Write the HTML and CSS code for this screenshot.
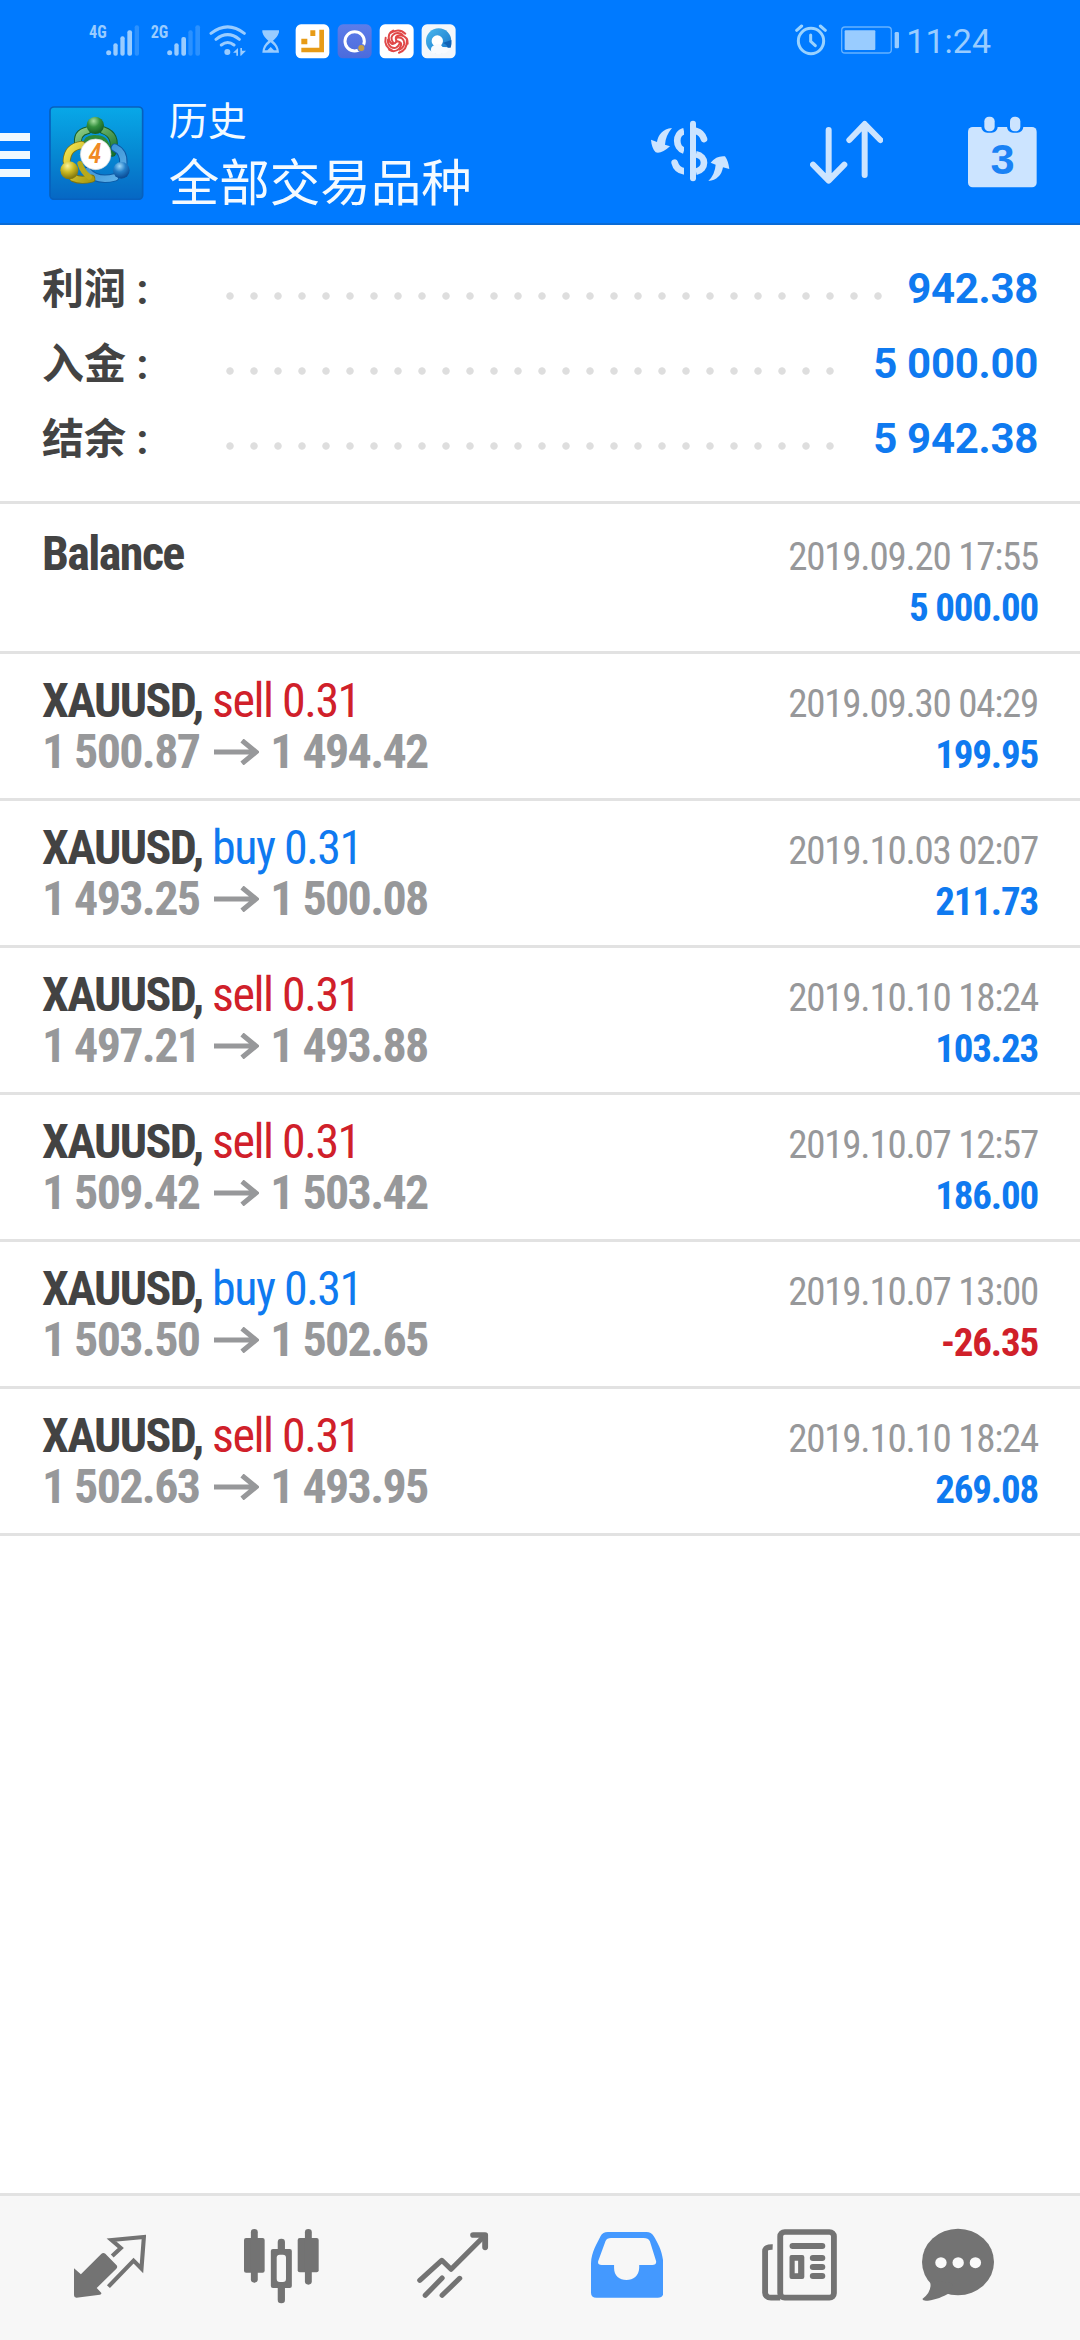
FILE: index.html
```html
<!DOCTYPE html>
<html lang="zh-CN">
<head>
<meta charset="utf-8">
<title>历史</title>
<link rel="stylesheet" href="styles.css">
</head>
<body>
<div class="app">
  <header class="header">
    <div class="status">
      <svg class="status-left" viewBox="55 65 1105 115" aria-hidden="true">
        <defs>
          <linearGradient id="sky" x1="0" y1="0" x2="1" y2="1"><stop offset="0" stop-color="#49b8ee"/><stop offset="1" stop-color="#1673c8"/></linearGradient>
          <linearGradient id="violet" x1="0" y1="0" x2="0" y2="1"><stop offset="0" stop-color="#5d7de9"/><stop offset="1" stop-color="#4b6bdc"/></linearGradient>
        </defs>
        <g fill="#99ccff">
          <text class="net" x="58" y="113" textLength="53" lengthAdjust="spacingAndGlyphs">4G</text>
          <text class="net" x="243" y="113" textLength="53" lengthAdjust="spacingAndGlyphs">2G</text>
          <circle cx="117" cy="157" r="7.500"/><rect x="131" y="129" width="13" height="37" rx="6"/><rect x="152" y="108" width="13" height="58" rx="6"/><rect x="173" y="90" width="14" height="76" rx="6"/>
          <circle cx="300" cy="157" r="7.500"/><rect x="314" y="129" width="13" height="37" rx="6"/><rect x="335" y="110" width="14" height="56" rx="6"/>
          <circle cx="473" cy="155" r="9"/>
          <path d="M490 157L505 143V166H500V157ZM512 143H517V151H529L514 166H512Z"/>
          <path d="M578 90H628V96Q624 110 610 121Q628 136 628 157H578Q578 136 596 121Q582 110 578 96ZM603 126Q588 137 585 150H593L603 140L613 150H621Q618 137 603 126Z" fill-rule="evenodd"/>
        </g>
        <g fill="#2b91ff"><rect x="195" y="75" width="13" height="91" rx="6"/><rect x="356" y="90" width="13" height="76" rx="6"/><rect x="377" y="75" width="14" height="91" rx="6"/></g>
        <g fill="none" stroke="#99ccff" stroke-width="9" stroke-linecap="round"><path d="M424 99Q474 60 524 99M439 117Q474 89 509 117M455 134Q474 119 493 134"/></g>
        <rect x="678" y="72" width="101" height="102" rx="16" fill="#fff"/>
        <path d="M749 88H763V156H695V142H749ZM722 90H737V107H722ZM695 115H713V132H695Z" fill="#e79b16"/>
        <rect x="804" y="72" width="102" height="102" rx="16" fill="url(#violet)"/>
        <circle cx="855" cy="123" r="29" fill="none" stroke="#fff" stroke-width="9"/><circle cx="875" cy="143" r="12" fill="#5874df"/><circle cx="875" cy="143" r="9" fill="#c5a046"/>
        <rect x="930" y="72" width="102" height="102" rx="16" fill="#fff"/>
        <g fill="none" stroke="#e04848" stroke-width="6" stroke-linecap="round">
          <g id="swirl"><path d="M981 123Q972 103 995 105Q1016 111 1014 130M963 98Q988 82 1007 100M981 112Q1004 109 1004 130Q1001 144 989 148"/></g>
          <use href="#swirl" transform="rotate(120 981 123)"/><use href="#swirl" transform="rotate(240 981 123)"/>
        </g>
        <rect x="1056" y="72" width="102" height="102" rx="16" fill="#f3f7fb"/>
        <circle cx="1107" cy="122" r="38" fill="url(#sky)"/><circle cx="1103" cy="122" r="17" fill="#fff"/>
        <path d="M1086 158Q1078 138 1097 133Q1110 125 1119 140L1145 141Q1133 163 1104 162Z" fill="#f8fbfe"/><path d="M1119 128Q1132 132 1134 142H1143Q1147 130 1145 119Z" fill="#1263b5"/>
      </svg>
      <div class="status-right">
        <svg class="status-power" viewBox="72 70 314 100" aria-hidden="true">
          <g fill="none" stroke="#99d2ff" stroke-linecap="round"><circle cx="120" cy="124" r="38" stroke-width="9"/><path d="M119 106V125L133 138" stroke-width="9"/><path d="M77 92L92 79M148 79L163 92" stroke-width="9"/></g>
          <rect x="212" y="82" width="149" height="78" rx="10" fill="none" stroke="#66b2ff" stroke-width="4"/>
          <rect x="221" y="92" width="92" height="59" rx="3" fill="#99ccff"/><rect x="371" y="97" width="13" height="49" rx="4" fill="#99ccff"/>
        </svg>
        <span class="clock">11:24</span>
      </div>
    </div>
    <div class="toolbar">
      <div class="menu"><i></i><i></i><i></i></div>
      <svg class="logo" viewBox="147 77 284 284" aria-hidden="true">
        <defs>
          <linearGradient id="lbg" x1="0" y1="0" x2="0" y2="1"><stop offset="0" stop-color="#08a8e8"/><stop offset=".5" stop-color="#0689d3"/><stop offset="1" stop-color="#0667c4"/></linearGradient>
          <linearGradient id="lg" x1="0" y1="0" x2="1" y2="1"><stop offset="0" stop-color="#8ccc84"/><stop offset="1" stop-color="#18722b"/></linearGradient>
          <linearGradient id="ly" x1="0" y1="0" x2="1" y2="1"><stop offset="0" stop-color="#f4e450"/><stop offset="1" stop-color="#a99a10"/></linearGradient>
          <linearGradient id="lb" x1="0" y1="0" x2="1" y2="1"><stop offset="0" stop-color="#2a86cd"/><stop offset="1" stop-color="#62b3ea"/></linearGradient>
          <radialGradient id="hg" cx=".4" cy=".25" r=".7"><stop offset="0" stop-color="#a8e0a0"/><stop offset=".5" stop-color="#35913f"/><stop offset="1" stop-color="#176327"/></radialGradient>
          <radialGradient id="hy" cx=".4" cy=".25" r=".7"><stop offset="0" stop-color="#fbf39a"/><stop offset=".5" stop-color="#cdbb24"/><stop offset="1" stop-color="#857a10"/></radialGradient>
          <radialGradient id="hb" cx=".4" cy=".25" r=".7"><stop offset="0" stop-color="#9ed8fa"/><stop offset=".5" stop-color="#237fc9"/><stop offset="1" stop-color="#0c4f99"/></radialGradient>
        </defs>
        <rect x="150" y="80" width="278" height="277" rx="12" fill="url(#lbg)" stroke="#0760bd" stroke-width="5"/>
        <g fill="none" stroke-linecap="round">
          <path d="M235 195Q228 157 262 150M310 150Q353 165 337 217" stroke="#155f2b" stroke-width="24"/>
          <path d="M235 195Q228 157 262 150M310 150Q353 165 337 217" stroke="url(#lg)" stroke-width="18"/>
          <path d="M286 172Q258 170 256 195M286 172Q316 172 322 200" stroke="#2c8a3b" stroke-width="16"/>
          <path d="M345 202Q372 215 370 248M262 272Q290 305 345 291" stroke="#0d5aa5" stroke-width="25"/>
          <path d="M345 202Q372 215 370 248M262 272Q290 305 345 291" stroke="url(#lb)" stroke-width="19"/>
          <path d="M245 194Q202 200 200 242M220 293Q242 303 274 295" stroke="#7d7312" stroke-width="24"/>
          <path d="M245 194Q202 200 200 242M220 293Q242 303 274 295" stroke="url(#ly)" stroke-width="19"/>
          <path d="M240 250Q248 275 268 290" stroke="#b8a91c" stroke-width="16"/>
        </g>
        <circle cx="286" cy="135" r="26" fill="url(#hg)"/><circle cx="208" cy="270" r="27" fill="url(#hy)"/><circle cx="364" cy="270" r="25" fill="url(#hb)"/>
        <circle cx="287" cy="222" r="46" fill="#fff" stroke="#cfd4d8" stroke-width="2"/>
        <text class="logo-num" x="285" y="249" text-anchor="middle">4</text>
      </svg>
      <div class="titles">
        <div class="title">历史</div>
        <div class="subtitle">全部交易品种</div>
      </div>
      <div class="actions">
        <svg class="act-money" viewBox="93 108 236 216" aria-hidden="true">
          <g fill="none" stroke="#cce4ff" stroke-width="20">
            <path d="M219 131V295" stroke-width="18" stroke-linecap="round"/>
            <path d="M192 154C165 160 165 204 192 212"/>
            <path d="M228 223C260 229 260 268 228 275"/>
            <path d="M228 153C242 157 248 163 252 177" stroke-linecap="round"/><path d="M164 248C168 264 176 271 192 274" stroke-linecap="round"/>
          </g>
          <path d="M201 135V225M201 240V290" stroke="#007aff" stroke-width="18"/>
          <g fill="#cce4ff"><path d="M156 144C128 146 114 165 111 186L93 179C94 195 99 208 107 217Q125 222 150 199L135 194Q136 168 156 144Z"/><path d="M265 303Q285 283 287 254L272 248Q290 226 315 229Q325 243 328 267L309 262C305 286 290 301 265 303Z"/></g>
        </svg>
        <svg class="act-sort" viewBox="568 108 220 216" aria-hidden="true">
          <path d="M624 150V300M577 254L624 302L671 254M732 285V134M686 180L732 132L779 180" fill="none" stroke="#cce4ff" stroke-width="18" stroke-linecap="round" stroke-linejoin="round"/>
        </svg>
        <svg class="act-cal" viewBox="1043 108 207 216" aria-hidden="true">
          <rect x="1043" y="141" width="206" height="181" rx="14" fill="#cce4ff"/>
          <rect x="1083" y="100" width="49" height="58" rx="18" fill="#007aff"/><rect x="1160" y="100" width="49" height="58" rx="18" fill="#007aff"/>
          <rect x="1092" y="110" width="31" height="44" rx="14" fill="#cce4ff"/><rect x="1169" y="110" width="31" height="44" rx="14" fill="#cce4ff"/>
          <text class="cal-num" x="1147" y="283" text-anchor="middle">3</text>
        </svg>
      </div>
    </div>
  </header>

  <section class="summary">
    <div class="sum-row"><span class="sum-label">利润 :</span><span class="leader"></span><b class="sum-value">942.38</b></div>
    <div class="sum-row"><span class="sum-label">入金 :</span><span class="leader leader-short"></span><b class="sum-value">5 000.00</b></div>
    <div class="sum-row"><span class="sum-label">结余 :</span><span class="leader leader-short"></span><b class="sum-value">5 942.38</b></div>
  </section>

  <main class="deals">
    <article class="deal deal-balance">
      <div class="line"><span class="sym">Balance</span><span class="date">2019.09.20 17:55</span></div>
      <div class="line"><span class="prices">&nbsp;</span><span class="profit">5 000.00</span></div>
    </article>
    <article class="deal">
      <div class="line"><span class="sym">XAUUSD, <span class="sell">sell 0.31</span></span><span class="date">2019.09.30 04:29</span></div>
      <div class="line"><span class="prices"><span>1 500.87</span><svg class="arrow" viewBox="0 0 45 26"><path d="M0 13H42M28 1.500L42 13L28 24.500"/></svg><span>1 494.42</span></span><span class="profit">199.95</span></div>
    </article>
    <article class="deal">
      <div class="line"><span class="sym">XAUUSD, <span class="buy">buy 0.31</span></span><span class="date">2019.10.03 02:07</span></div>
      <div class="line"><span class="prices"><span>1 493.25</span><svg class="arrow" viewBox="0 0 45 26"><path d="M0 13H42M28 1.500L42 13L28 24.500"/></svg><span>1 500.08</span></span><span class="profit">211.73</span></div>
    </article>
    <article class="deal">
      <div class="line"><span class="sym">XAUUSD, <span class="sell">sell 0.31</span></span><span class="date">2019.10.10 18:24</span></div>
      <div class="line"><span class="prices"><span>1 497.21</span><svg class="arrow" viewBox="0 0 45 26"><path d="M0 13H42M28 1.500L42 13L28 24.500"/></svg><span>1 493.88</span></span><span class="profit">103.23</span></div>
    </article>
    <article class="deal">
      <div class="line"><span class="sym">XAUUSD, <span class="sell">sell 0.31</span></span><span class="date">2019.10.07 12:57</span></div>
      <div class="line"><span class="prices"><span>1 509.42</span><svg class="arrow" viewBox="0 0 45 26"><path d="M0 13H42M28 1.500L42 13L28 24.500"/></svg><span>1 503.42</span></span><span class="profit">186.00</span></div>
    </article>
    <article class="deal">
      <div class="line"><span class="sym">XAUUSD, <span class="buy">buy 0.31</span></span><span class="date">2019.10.07 13:00</span></div>
      <div class="line"><span class="prices"><span>1 503.50</span><svg class="arrow" viewBox="0 0 45 26"><path d="M0 13H42M28 1.500L42 13L28 24.500"/></svg><span>1 502.65</span></span><span class="profit loss">-26.35</span></div>
    </article>
    <article class="deal">
      <div class="line"><span class="sym">XAUUSD, <span class="sell">sell 0.31</span></span><span class="date">2019.10.10 18:24</span></div>
      <div class="line"><span class="prices"><span>1 502.63</span><svg class="arrow" viewBox="0 0 45 26"><path d="M0 13H42M28 1.500L42 13L28 24.500"/></svg><span>1 493.95</span></span><span class="profit">269.08</span></div>
    </article>
  </main>

  <nav class="tabs">
    <svg class="tab-quotes" viewBox="215 138 210 240" preserveAspectRatio="none" aria-hidden="true">
      <path d="M215 265L235 283L294 222Q300 216 306 221L338 255Q343 260 338 266L281 324L294 338Q296 343 290 344L222 353Q215 353 215 346Z" fill="#737373"/>
      <path d="M326 228L351 204L324 180L418 171L411 266L388 242L315 320" fill="none" stroke="#737373" stroke-width="12"/>
    </svg>
    <svg class="tab-chart" viewBox="709 138 217 240" preserveAspectRatio="none" aria-hidden="true">
      <g fill="#737373"><rect x="709" y="174" width="60" height="104" rx="6"/><rect x="729" y="147" width="20" height="161" rx="10"/><rect x="787" y="207" width="61" height="117" rx="6"/><rect x="807" y="176" width="21" height="194" rx="10"/><rect x="865" y="174" width="61" height="103" rx="6"/><rect x="886" y="147" width="20" height="167" rx="10"/></g>
      <rect x="804" y="224" width="27" height="82" rx="9" fill="#f7f7f7"/>
    </svg>
    <svg class="tab-trade" viewBox="1213 138 208 240" preserveAspectRatio="none" aria-hidden="true">
      <g fill="none" stroke="#737373" stroke-width="15" stroke-linecap="round" stroke-linejoin="round"><path d="M1221 301L1285 241L1312 268L1408 169M1237 346L1286 294M1286 346L1337 295"/><path d="M1376 165H1411V202" stroke-width="17"/></g>
    </svg>
    <svg class="tab-history" viewBox="147 138 210 240" preserveAspectRatio="none" aria-hidden="true">
      <path fill="#4499ff" fill-rule="evenodd" d="M147 250C148 215 165 190 175 168Q181 156 196 156H308Q322 156 329 168C342 190 355 215 357 250V338Q357 353 341 353H163Q147 353 147 338ZM205 174H300Q313 174 318 184L336 243Q338 255 325 255H287V264C286 288 270 300 250 300C230 300 214 288 214 264V255H178Q165 255 168 243L189 184Q193 174 205 174Z"/>
    </svg>
    <svg class="tab-news" viewBox="646 138 218 240" preserveAspectRatio="none" aria-hidden="true">
      <rect x="699" y="156" width="156" height="197" rx="13" fill="none" stroke="#737373" stroke-width="17"/>
      <path d="M677 201Q655 200 655 214V338Q656 353 672 353H699" fill="none" stroke="#737373" stroke-width="17"/>
      <path d="M735 198H821M794 234H821M794 261H821M794 288H821" stroke="#737373" stroke-width="18" stroke-linecap="round"/>
      <path fill="#737373" fill-rule="evenodd" d="M732 225H763Q769 225 769 231V291Q769 297 763 297H732Q726 297 726 291V231Q726 225 732 225ZM741 242V280H751V242Z"/>
    </svg>
    <svg class="tab-chat" viewBox="1109 138 209 240" preserveAspectRatio="none" aria-hidden="true">
      <ellipse cx="1213.500" cy="246" rx="104.500" ry="99.500" fill="#737373"/>
      <path d="M1131 300Q1142 332 1110 357Q1112 364 1126 362C1150 360 1170 350 1188 340L1200 310Z" fill="#737373"/>
      <g fill="#fafafa"><circle cx="1164" cy="248" r="16.500"/><circle cx="1214" cy="248" r="16.500"/><circle cx="1264" cy="248" r="16.500"/></g>
    </svg>
  </nav>
</div>
</body>
</html>
```

FILE: styles.css
```css
* { box-sizing: border-box; }
body { margin: 0; background: #fff; font-family: Roboto, "Noto Sans CJK SC", sans-serif; }
svg { display: block; flex: none; }

.app { width: 1080px; height: 2340px; display: flex; flex-direction: column; overflow: hidden; }

.header { height: 225px; background: #007aff; border-bottom: 2px solid #0a6bd6; }
.status { height: 80px; display: flex; justify-content: space-between; padding: 0 89px 0 88px; }
.status-left { width: 368.33px; height: 38.33px; margin-top: 21.67px; }
.net { font: 700 56px "Roboto Condensed", Roboto, sans-serif; }
.status-right { display: flex; gap: 7px; }
.status-power { width: 104.67px; height: 33.33px; margin-top: 23.33px; }
.clock { font-size: 34px; line-height: 40px; margin-top: 21px; color: #99ccff; }

.toolbar { height: 143px; display: flex; padding-right: 43px; }
.menu { width: 30px; display: flex; flex-direction: column; gap: 10px; padding-top: 53px; }
.menu i { height: 8px; background: #f0f8ff; }
.logo { width: 94.67px; height: 94.67px; margin: 25.67px 0 0 19px; }
.logo-num { font: italic 500 80px "Roboto Condensed", Roboto, sans-serif; fill: #f08a24; }
.titles { margin: 16px 0 0 25px; color: #f4faff; font-family: "Noto Sans CJK SC", sans-serif; font-weight: 400; }
.title { font-size: 39px; line-height: 44px; }
.subtitle { font-size: 50.5px; line-height: 60px; margin-top: 9px; white-space: nowrap; }
.actions { display: flex; margin: 36px 0 0 auto; }
.act-money { width: 78.67px; height: 72px; }
.act-sort { width: 73.33px; height: 72px; margin-left: 79.7px; }
.act-cal { width: 69px; height: 72px; margin-left: 85px; }
.cal-num { font: 700 130px "Liberation Sans", sans-serif; fill: #1a82f5; }

.summary { height: 279px; padding: 27px 42px 0; border-bottom: 3px solid #e2e2e2; }
.sum-row { height: 75px; display: flex; align-items: center; }
.sum-label { width: 176px; font-size: 42px; line-height: 75px; font-weight: 700; color: #434343; }
.leader { width: 672px; height: 8px; margin-top: 13px; background: radial-gradient(circle, #dedede 3.3px, transparent 4.1px) 0 0 / 24px 8px repeat-x; }
.leader-short { width: 624px; }
.sum-value { margin: -2px 0 0 auto; font-size: 42px; line-height: 73px; letter-spacing: -0.3px; color: #0f7af0; white-space: nowrap; }

.deals { flex: 1; font-family: "Roboto Condensed", Roboto, sans-serif; font-stretch: 75%; }
.deal { height: 147px; padding: 21px 42px 0; border-bottom: 3px solid #e2e2e2; }
.deal-balance { height: 150px; padding-top: 24px; }
.line { height: 51px; line-height: 51px; display: flex; justify-content: space-between; align-items: baseline; white-space: nowrap; }
.sym { font-size: 48px; font-weight: 700; letter-spacing: -1.6px; color: #434343; }
.sell, .buy { font-weight: 400; letter-spacing: -1.5px; }
.sell { color: #d0202a; }
.buy { color: #0f7af0; }
.date { font-size: 39px; letter-spacing: -1.25px; color: #97989a; }
.prices { font-size: 48px; font-weight: 700; letter-spacing: -1.65px; color: #97989a; display: flex; align-items: baseline; }
.arrow { width: 45px; height: 26px; margin: 0 11px 0 15px; align-self: center; fill: none; stroke: #97989a; stroke-width: 5; }
.profit { font-size: 39px; font-weight: 700; letter-spacing: -1.2px; color: #0f7af0; }
.profit.loss { color: #d0202a; }

.tabs { height: 147px; display: flex; padding: 30px 0 0 74px; background: #f7f7f7; border-top: 3px solid #e2e2e2; }
.tabs svg { height: 80px; }
.tab-quotes { width: 72.3px; }
.tab-chart { width: 74.7px; margin-left: 97.7px; }
.tab-trade { width: 71.6px; margin-left: 98.8px; }
.tab-history { width: 72.3px; margin-left: 101.5px; }
.tab-news { width: 75px; margin-left: 99.5px; }
.tab-chat { width: 72px; margin-left: 84.5px; }
```
